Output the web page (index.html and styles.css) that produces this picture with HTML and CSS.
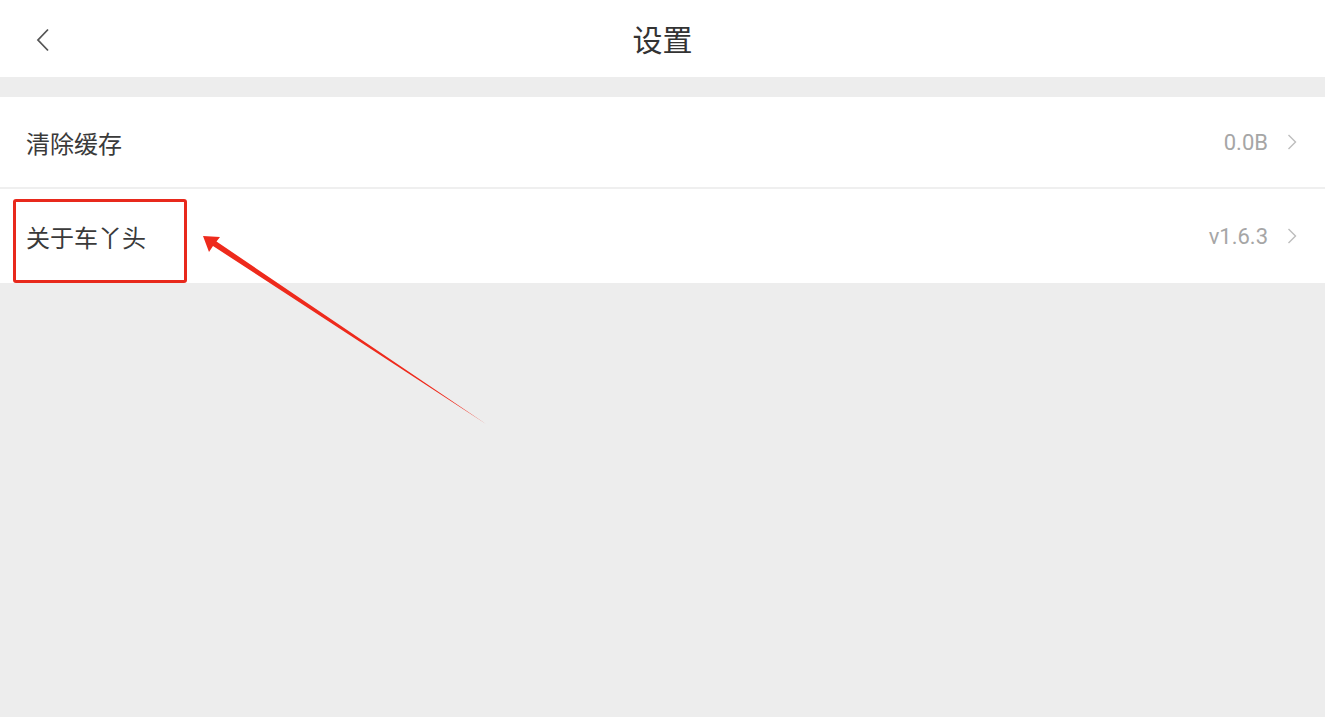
FILE: index.html
```html
<!DOCTYPE html>
<html lang="zh-CN">
<head>
<meta charset="utf-8">
<title>设置</title>
<link rel="stylesheet" href="styles.css">
</head>
<body>
<div class="page">
  <header class="topbar">
    <button class="back" aria-label="返回">
      <svg width="16" height="24" viewBox="0 0 16 24"><path d="M12 1.5 L2 12 L12 22.5" fill="none" stroke="#555" stroke-width="1.8"/></svg>
    </button>
    <h1 class="title">设置</h1>
  </header>
  <div class="spacer"></div>
  <ul class="list">
    <li class="row">
      <span class="label">清除缓存</span>
      <span class="value">0.0B</span>
      <svg class="chev" width="10" height="16" viewBox="0 0 10 16"><path d="M1.5 1 L8.5 8 L1.5 15" fill="none" stroke="#bdbdbd" stroke-width="1.4"/></svg>
    </li>
    <li class="row row-last">
      <span class="label">关于车丫头</span>
      <span class="value">v1.6.3</span>
      <svg class="chev" width="10" height="16" viewBox="0 0 10 16"><path d="M1.5 1 L8.5 8 L1.5 15" fill="none" stroke="#bdbdbd" stroke-width="1.4"/></svg>
    </li>
  </ul>
  <div class="highlight"></div>
  <svg class="arrow" width="1325" height="717" viewBox="0 0 1325 717">
    <polygon points="203,236 220,237 216.5,241.5 486,424 213,246 209,252" fill="#ee2a1c"/>
  </svg>
</div>
</body>
</html>
```

FILE: styles.css
```css
* { box-sizing: border-box; }
html, body {
  margin: 0;
  padding: 0;
  background: #ededed;
  font-family: "Roboto", "Noto Sans CJK SC", sans-serif;
}
.page {
  position: relative;
  width: 1325px;
  height: 717px;
  background: #ededed;
  overflow: hidden;
}
.topbar {
  position: relative;
  height: 77px;
  background: #fff;
  display: flex;
  align-items: center;
  justify-content: center;
}
.back {
  position: absolute;
  left: 36px;
  top: 28px;
  width: 20px;
  height: 24px;
  padding: 0;
  border: 0;
  background: none;
  display: flex;
}
.title {
  margin: 0 0 2px;
  font-family: "Noto Sans CJK SC", sans-serif;
  font-weight: 400;
  font-size: 30px;
  color: #333;
}
.spacer { height: 20px; }
.list {
  list-style: none;
  margin: 0;
  padding: 0;
  background: #fff;
}
.row {
  height: 92px;
  display: flex;
  align-items: center;
  padding: 0 28px 0 26px;
  border-bottom: 2px solid #efefef;
}
.row-last {
  height: 94px;
  border-bottom: 0;
}
.label {
  flex: 1;
  font-family: "Noto Sans CJK SC", sans-serif;
  font-size: 24px;
  color: #3a3a3a;
}
.value {
  font-family: "Roboto", sans-serif;
  font-size: 22px;
  color: #a6a6a6;
  margin-right: 19px;
}
.chev { display: block; }
.highlight {
  position: absolute;
  left: 13px;
  top: 199px;
  width: 174px;
  height: 84px;
  border: 3px solid #e8291c;
  border-radius: 3px;
}
.arrow {
  position: absolute;
  left: 0;
  top: 0;
  pointer-events: none;
}
```
